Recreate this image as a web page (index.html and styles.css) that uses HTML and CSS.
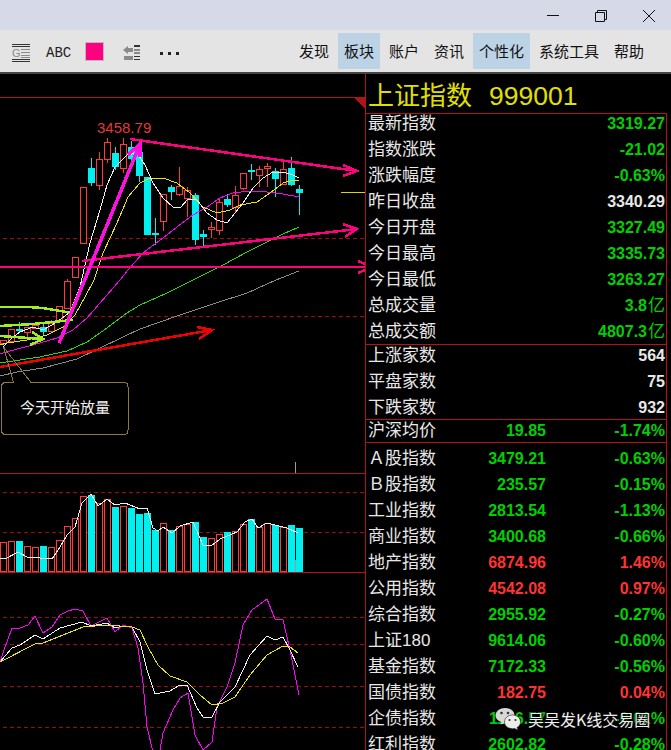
FILE: index.html
```html
<!DOCTYPE html>
<html lang="zh-CN">
<head>
    <meta charset="UTF-8">
    <title>上证指数 999001</title>
    <link rel="stylesheet" href="styles.css">
</head>
<body>
    <!-- Title bar -->
    <div class="titlebar">
        <svg class="win-icon" viewBox="0 0 12 12"><path d="M0 5.5H12"/></svg>
        <svg class="win-icon" viewBox="0 0 12 12"><path d="M.5 2.5H9.5V11.5H.5ZM2.5 2.5V.5H11.5V9.5H9.5"/></svg>
        <svg class="win-icon" viewBox="0 0 12 12"><path d="M0 0L12 12M12 0L0 12"/></svg>
    </div>

    <!-- Toolbar -->
    <div class="toolbar">
        <div class="tools">
            <div class="tool-list">
                <span class="tool-g">G</span>
                <svg class="tool-lines" viewBox="0 0 18 18">
                    <path class="dark" d="M0 .5H18M0 2.5H18M0 15.5H18M0 17.5H18"/>
                    <path class="grey" d="M9 5.5H18M9 8.5H18M9 11.5H18M9 13.5H18"/>
                </svg>
            </div>
            <span class="tool-abc">ABC</span>
            <span class="tool-swatch"></span>
            <svg class="tool-align" viewBox="0 0 17 16">
                <path class="grey-fill" d="M0 5L5 1V3H10V7H5V9ZM1 11H10V15H1Z"/>
                <path class="dark" d="M11 .5H17M11 1.5H17M11 11.5H17M11 14.5H17"/>
                <path class="grey" d="M11 4.5H17M11 5.5H17M11 7.5H17M11 8.5H17"/>
            </svg>
            <div class="tool-dots"><i></i><i></i><i></i></div>
        </div>
        <nav class="menu">
            <a>发现</a>
            <a class="on">板块</a>
            <a>账户</a>
            <a>资讯</a>
            <a class="on">个性化</a>
            <a>系统工具</a>
            <a>帮助</a>
        </nav>
    </div>

    <div class="main">
        <!-- Chart panes, drawn in page coordinates -->
        <svg class="chart" viewBox="0 74 365 676" width="365" height="676">
            <!-- grid -->
            <path class="frame" d="M0 97.5H365M0 473.5H365M0 572.5H365"/>
            <path class="frame-fill" d="M354 98H365V109Z"/>
            <path class="dash" d="M3 238.5H365M3 316.5H365M3 492.5H365M3 532.5H365M3 617.5H365M3 644.5H365M3 686.5H365M3 727.5H365"/>
            <path class="prev-close" d="M341 192.5H365"/>
            <path class="tick" d="M295.5 462V473M295.5 560V572"/>

            <!-- candles -->
            <path class="wick-red" d="M27.5 332V338M51.5 320V323M67.5 279V281M99.5 152V190M107.5 138V163M123.5 138V173M163.5 221V231M179.5 167V196M187.5 187V217M211.5 222V238M219.5 198V235M235.5 186V213M243.5 188V190M259.5 166V187M267.5 163V187M283.5 162V185"/>
            <path class="wick-cyan" d="M19.5 322V333M43.5 323V336M91.5 158V186M115.5 147V170M131.5 141V165M139.5 143V182M155.5 218V245M171.5 185V200M195.5 193V245M203.5 230V248M227.5 194V207M251.5 164V180M275.5 168V197M291.5 157V186M299.5 185V215"/>
            <path class="body-red" d="M.5 340.5h6v3h-6zM8.5 329.5h6v12h-6zM24.5 327.5h6v5h-6zM32.5 325.5h6v3h-6zM48.5 323.5h6v8h-6zM56.5 306.5h6v14h-6zM64.5 281.5h6v27h-6zM72.5 257.5h6v20h-6zM80.5 187.5h6v56h-6zM96.5 159.5h6v26h-6zM104.5 142.5h6v17h-6zM120.5 144.5h6v24h-6zM160.5 194.5h6v27h-6zM176.5 186.5h6v8h-6zM184.5 190.5h6v8h-6zM208.5 227.5h6v2h-6zM216.5 202.5h6v28h-6zM232.5 195.5h6v12h-6zM240.5 173.5h6v15h-6zM256.5 169.5h6v6h-6zM264.5 166.5h6v2h-6zM280.5 169.5h6v15h-6z"/>
            <path class="body-cyan" d="M16 329h7v2h-7zM40 327h7v5h-7zM88 168h7v15h-7zM112 153h7v14h-7zM128 147h7v12h-7zM136 152h7v24h-7zM144 177h7v58h-7zM152 233h7v2h-7zM168 187h7v5h-7zM192 195h7v45h-7zM200 234h7v3h-7zM224 199h7v6h-7zM248 170h7v2h-7zM272 171h7v8h-7zM288 168h7v17h-7zM296 189h7v4h-7z"/>

            <!-- moving averages -->
            <polyline class="ma ma-grey" points="0,376 17,372 43,368 77,359 100,348 123,337 140,329 160,322 180,315 213,304 247,293 276,280 299,271"/>
            <polyline class="ma ma-green" points="0,363 13,361 40,357 67,351 87,342 107,328 127,313 140,305 167,293 193,280 223,265 247,252 267,242 283,234 299,227"/>
            <polyline class="ma ma-pink" points="0,354 17,349 33,345 57,338 73,330 87,318 100,303 120,280 128,270 143,253 163,238 177,227 193,215 207,207 220,198 233,193 250,191 267,192 283,194 299,197"/>
            <polyline class="ma ma-yellow" points="0,345 7,343 27,340 47,335 63,327 75,315 85,297 94,280 103,253 117,223 128,197 140,183 150,178 163,178 177,183 190,193 203,207 217,213 230,210 240,205 257,202 270,193 283,183 293,180 299,180"/>
            <polyline class="ma ma-white" points="3,347 12,338 20,332 33,327 43,330 57,322 70,312 80,287 90,243 100,210 107,185 115,167 127,155 137,153 145,165 153,183 163,198 173,207 180,208 188,199 197,200 207,213 217,220 227,223 235,213 243,203 253,188 263,178 273,172 283,172 293,175 299,178"/>

            <!-- hand drawn lines -->
            <path class="draw-lime" d="M0 307L28 307L43 308L72 313M0 326L33 324L73 320M0 336L43 339M32 332L43 339L30 345"/>
            <path class="draw-red" d="M0 367L212 330M197 327L212 330L199 339"/>
            <path class="draw-hot" d="M130 139L357 171M343 165L357 171L343 176M82 261L357 229M343 224L357 229L345 237M0 267H365M358 261L365 264M358 273L365 270"/>
            <path class="draw-magenta" d="M59 343L140 144M128 155L140 144L140 157"/>

            <text class="high-label" x="97" y="133">3458.79</text>

            <!-- note -->
            <path class="note" d="M13.5 382.5L3.5 347L31 382.5H124Q128 382.5 128 386.5V430Q128 434.5 124 434.5H6Q1.5 434.5 1.5 430V386.5Q1.5 382.5 6 382.5Z"/>
            <text class="note-text" x="20" y="413">今天开始放量</text>

            <!-- volume -->
            <path class="vol-red" d="M.5 542.5h6v29h-6zM8.5 541.5h6v30h-6zM24.5 546.5h6v25h-6zM32.5 547.5h6v24h-6zM48.5 547.5h6v24h-6zM56.5 540.5h6v31h-6zM64.5 526.5h6v45h-6zM72.5 518.5h6v53h-6zM80.5 496.5h6v75h-6zM96.5 503.5h6v68h-6zM104.5 499.5h6v72h-6zM120.5 506.5h6v65h-6zM160.5 523.5h6v48h-6zM176.5 526.5h6v45h-6zM184.5 524.5h6v47h-6zM208.5 538.5h6v33h-6zM216.5 534.5h6v37h-6zM232.5 531.5h6v40h-6zM240.5 524.5h6v47h-6zM256.5 527.5h6v44h-6zM264.5 523.5h6v48h-6zM280.5 527.5h6v44h-6z"/>
            <path class="body-cyan" d="M16 541h7v31h-7zM40 546h7v26h-7zM88 495h7v77h-7zM112 507h7v65h-7zM128 508h7v64h-7zM136 514h7v58h-7zM144 513h7v59h-7zM152 530h7v42h-7zM168 530h7v42h-7zM192 522h7v50h-7zM200 537h7v35h-7zM224 532h7v40h-7zM248 519h7v53h-7zM272 525h7v47h-7zM288 525h7v47h-7zM296 528h7v44h-7z"/>
            <polyline class="ma ma-white" points="0,559 7,558 18,552 27,557 52,559 60,547 67,535 75,527 82,503 91,494 98,506 107,499 115,505 125,503 140,509 147,508 153,528 158,531 163,527 172,533 180,526 193,522 203,545 211,546 220,539 237,532 245,522 252,519 258,528 267,523 287,528 298,533"/>

            <!-- kdj -->
            <polyline class="ma ma-pink" points="0,662 4,650 12,628 20,628 28,625 35,616 43,633 52,627 60,615 68,611 75,609 83,611 91,626 107,618 115,632 123,625 132,628 138,648 143,683 147,727 153,752 160,750 163,733 173,710 180,698 188,693 195,735 203,750 212,742 217,707 227,687 235,663 243,625 252,610 267,599 275,619 283,620 290,650 299,695"/>
            <polyline class="ma ma-white" points="0,662 12,648 20,645 35,635 43,639 60,628 82,622 91,626 107,623 115,628 123,626 132,627 140,642 147,670 155,694 170,691 178,686 187,685 197,708 203,717 212,717 220,702 235,687 250,655 267,636 275,640 283,637 290,650 298,667"/>
            <polyline class="ma ma-yellow" points="0,662 35,644 43,643 83,627 107,625 132,627 140,630 148,647 158,665 170,676 187,682 200,695 212,705 223,703 235,697 250,675 267,655 283,646 290,647 298,653"/>
        </svg>

        <!-- Quote panel -->
        <div class="panel">
            <div class="panel-title"><span>上证指数</span><span class="panel-code">999001</span></div>
            <div class="quotes">
                <div class="section first">
                    <div class="row"><span>最新指数</span><b class="down">3319.27</b></div>
                    <div class="row"><span>指数涨跌</span><b class="down">-21.02</b></div>
                    <div class="row"><span>涨跌幅度</span><b class="down">-0.63%</b></div>
                    <div class="row"><span>昨日收盘</span><b>3340.29</b></div>
                    <div class="row"><span>今日开盘</span><b class="down">3327.49</b></div>
                    <div class="row"><span>今日最高</span><b class="down">3335.73</b></div>
                    <div class="row"><span>今日最低</span><b class="down">3263.27</b></div>
                    <div class="row"><span>总成交量</span><b class="down">3.8<i class="unit">亿</i></b></div>
                    <div class="row"><span>总成交额</span><b class="down">4807.3<i class="unit">亿</i></b></div>
                </div>
                <div class="section">
                    <div class="row"><span>上涨家数</span><b>564</b></div>
                    <div class="row"><span>平盘家数</span><b>75</b></div>
                    <div class="row"><span>下跌家数</span><b>932</b></div>
                </div>
                <div class="section">
                    <div class="row three"><span>沪深均价</span><b class="down">19.85</b><b class="down">-1.74%</b></div>
                </div>
                <div class="section last">
                    <div class="row three"><span>Ａ股指数</span><b class="down">3479.21</b><b class="down">-0.63%</b></div>
                    <div class="row three"><span>Ｂ股指数</span><b class="down">235.57</b><b class="down">-0.15%</b></div>
                    <div class="row three"><span>工业指数</span><b class="down">2813.54</b><b class="down">-1.13%</b></div>
                    <div class="row three"><span>商业指数</span><b class="down">3400.68</b><b class="down">-0.66%</b></div>
                    <div class="row three"><span>地产指数</span><b class="up">6874.96</b><b class="up">1.46%</b></div>
                    <div class="row three"><span>公用指数</span><b class="up">4542.08</b><b class="up">0.97%</b></div>
                    <div class="row three"><span>综合指数</span><b class="down">2955.92</b><b class="down">-0.27%</b></div>
                    <div class="row three"><span>上证180</span><b class="down">9614.06</b><b class="down">-0.60%</b></div>
                    <div class="row three"><span>基金指数</span><b class="down">7172.33</b><b class="down">-0.56%</b></div>
                    <div class="row three"><span>国债指数</span><b class="up">182.75</b><b class="up">0.04%</b></div>
                    <div class="row three"><span>企债指数</span><b class="down">1146.57</b><b class="down">-0.01%</b></div>
                    <div class="row three"><span>红利指数</span><b class="down">2602.82</b><b class="down">-0.28%</b></div>
                </div>
            </div>
        </div>
    </div>

    <!-- Watermark over the panel -->
    <div class="watermark">
        <svg class="wm-icon" viewBox="0 0 26 23">
            <path class="bubble-a" d="M9.5 0C14.5 0 19 3 19 7.5C19 12 14.5 15 9.5 15L5 16.5L6 14C2.5 13 0 10.5 0 7.5C0 3 4.5 0 9.5 0Z"/>
            <path class="bubble-b" d="M17 7C21.5 7 25 10 25 14C25 16.5 23.5 18.5 21.5 19.5L22.5 22L19 20.5C14 21.5 9 18.5 9 14C9 10 12.5 7 17 7Z"/>
            <circle class="eye" cx="6" cy="5" r="1.3"/>
            <circle class="eye" cx="12.5" cy="5" r="1.3"/>
            <circle class="eye" cx="14" cy="12" r="1.1"/>
            <circle class="eye" cx="20" cy="12" r="1.1"/>
        </svg>
        <span>吴吴发K线交易圈</span>
    </div>
</body>
</html>
```

FILE: styles.css
```css
body {
    margin: 0;
    width: 671px;
    height: 750px;
    overflow: hidden;
    position: relative;
    background: #000;
    font-family: "Liberation Sans", "Noto Sans CJK SC", sans-serif;
}

/* Title bar */
.titlebar {
    height: 30px;
    box-sizing: border-box;
    padding: 10px 16px 0 0;
    background: #d5d9e8;
    display: flex;
    justify-content: flex-end;
    gap: 36px;
}

.win-icon {
    width: 12px;
    height: 12px;
    fill: none;
    stroke: #111;
    stroke-width: 1;
}

/* Toolbar */
.toolbar {
    height: 44px;
    box-sizing: border-box;
    background: #e4e4e4;
    border-bottom: 2px solid #444;
    display: flex;
    justify-content: space-between;
    padding: 3px 19px 0 12px;
}

.tools {
    display: flex;
    align-items: center;
    height: 36px;
}

.dark {
    fill: none;
    stroke: #333;
}

.grey {
    fill: none;
    stroke: #8a8a8a;
}

.grey-fill {
    fill: #8a8a8a;
}

.tool-list {
    position: relative;
    width: 18px;
    height: 18px;
    margin-top: 4px;
}

.tool-lines {
    display: block;
    width: 18px;
    height: 18px;
}

.tool-g {
    position: absolute;
    left: 0;
    top: 3px;
    font-size: 11px;
    line-height: 12px;
    color: #888;
}

.tool-abc {
    margin-left: 16px;
    width: 25px;
    font-family: "Liberation Mono", monospace;
    font-size: 14px;
    color: #222;
    margin-top: 4px;
}

.tool-swatch {
    margin-left: 14px;
    width: 17px;
    height: 17px;
    background: #ff0080;
    border: 1px solid #bbb;
    margin-top: 1px;
}

.tool-align {
    margin-left: 19px;
    width: 17px;
    height: 16px;
    margin-top: 4px;
}

.tool-dots {
    margin-left: 20px;
    margin-top: 4px;
    display: flex;
    gap: 5px;
}

.tool-dots i {
    width: 3px;
    height: 3px;
    background: #222;
}

.menu {
    display: flex;
    gap: 3px;
    height: 36px;
    margin-right: 2px;
    font-family: "Noto Sans CJK SC", sans-serif;
    font-size: 15px;
    line-height: 36px;
    color: #111;
}

.menu a {
    padding: 0 6px;
}

.menu .on {
    background: #bcd3e6;
}

/* Chart */
.main {
    display: flex;
    height: 676px;
}

.chart {
    display: block;
    flex: none;
    overflow: hidden;
    shape-rendering: crispEdges;
}

.frame {
    fill: none;
    stroke: #b01515;
}

.frame-fill {
    fill: #b01515;
}

.dash {
    fill: none;
    stroke: #9a0c0c;
    stroke-dasharray: 4 3;
}

.prev-close {
    stroke: #d8d800;
}

.tick {
    stroke: #9a9a9a;
}

.wick-red {
    stroke: #ff3a3a;
}

.wick-cyan {
    stroke: #00f0f0;
}

.body-red {
    fill: #000;
    stroke: #ff3a3a;
}

.body-cyan {
    fill: #00f0f0;
}

.vol-red {
    fill: #000;
    stroke: #ff3a3a;
}

.ma {
    fill: none;
}

.ma-white {
    stroke: #f0f0f0;
}

.ma-yellow {
    stroke: #e8e800;
}

.ma-pink {
    stroke: #ff00ff;
}

.ma-green {
    stroke: #22e000;
}

.ma-grey {
    stroke: #8a8a8a;
}

.draw-lime {
    fill: none;
    stroke: #a0f020;
    stroke-width: 2.5;
}

.draw-red {
    fill: none;
    stroke: #f00000;
    stroke-width: 2.5;
}

.draw-hot {
    fill: none;
    stroke: #ff0080;
    stroke-width: 2.5;
}

.draw-magenta {
    fill: none;
    stroke: #ff10e0;
    stroke-width: 3.5;
}

.high-label {
    fill: #e03a3a;
    font-size: 15px;
    shape-rendering: auto;
}

.note {
    fill: none;
    stroke: #8a7a40;
}

.note-text {
    fill: #f0f0f0;
    font-family: "Noto Sans CJK SC", sans-serif;
    font-size: 15px;
}

/* Quote panel */
.panel {
    flex: none;
    width: 305px;
    border-left: 1px solid #b01515;
    color: #e8e8e8;
}

.panel-title {
    height: 39px;
    box-sizing: border-box;
    padding-left: 2px;
    display: flex;
    gap: 17px;
    font-size: 26px;
    line-height: 44px;
    color: #e0e000;
}

.panel-code {
    font-size: 26.5px;
}

.quotes {
    width: 301px;
    box-sizing: border-box;
    border-top: 1px solid #b01515;
    border-right: 1px solid #b01515;
}

.section {
    display: flex;
    flex-direction: column;
    gap: 8px;
    padding: 2px 1px 2px 2px;
    border-bottom: 1px solid #b01515;
}

.section.first {
    padding: 1px 1px 3px 2px;
}

.section.last {
    padding-top: 7px;
    border-bottom: none;
}

.row {
    height: 18px;
    line-height: 18px;
    display: flex;
    justify-content: space-between;
    font-size: 17px;
    white-space: nowrap;
}

.row.three {
    display: grid;
    grid-template-columns: 68px 110px 1fr;
}

.row b {
    font-size: 16px;
    text-align: right;
}

.unit {
    margin-left: 1px;
    font-size: 17px;
    font-style: normal;
    font-weight: normal;
}

.down {
    color: #00d000;
}

.up {
    color: #ff3333;
}

/* Watermark */
.watermark {
    position: absolute;
    left: 495px;
    top: 707px;
    display: flex;
    gap: 6px;
    align-items: center;
    color: #eee;
    font-family: "Noto Sans CJK SC", sans-serif;
    font-size: 16px;
    text-shadow: 0 0 4px #000, 0 0 3px #000, 0 0 2px #222;
}

.wm-icon {
    width: 27px;
    height: 23px;
}

.bubble-a {
    fill: #d8d8d8;
}

.bubble-b {
    fill: #ececec;
    stroke: #222;
    stroke-width: .6;
}

.eye {
    fill: #333;
}
```
